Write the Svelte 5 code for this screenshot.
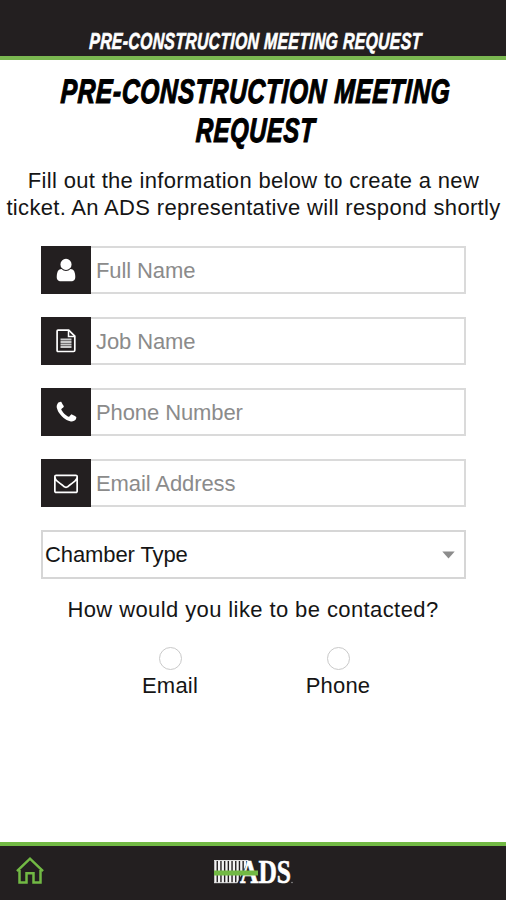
<script>
  const fields = [
    { icon: 'user', label: 'Full Name' },
    { icon: 'file', label: 'Job Name' },
    { icon: 'phone', label: 'Phone Number' },
    { icon: 'mail', label: 'Email Address' }
  ];
  const paths = {
    user: 'M1536 1399q0 109-62.5 187t-150.5 78h-854q-88 0-150.5-78t-62.5-187q0-85 8.5-160.5t31.5-152 58.5-131 94-89 134.5-34.5q131 128 313 128t313-128q76 0 134.5 34.5t94 89 58.5 131 31.5 152 8.5 160.5zm-256-887q0 159-112.5 271.5t-271.5 112.5-271.5-112.5-112.5-271.5 112.5-271.5 271.5-112.5 271.5 112.5 112.5 271.5z',
    phone: 'M1600 1240q0 27-10 70.5t-21 68.5q-21 50-122 106-94 51-186 51-27 0-53-3.5t-57.5-12.5-47-14.5-55.5-20.5-49-18q-98-35-175-83-127-79-264-216t-216-264q-48-77-83-175-3-9-18-49t-20.5-55.5-14.5-47-12.5-57.5-3.5-53q0-92 51-186 56-101 106-122 25-11 68.5-21t70.5-10q14 0 21 3 18 6 53 76 11 19 30 54t35 63.5 31 53.5q3 4 17.5 25t21.5 35.5 7 28.5q0 20-28.5 50t-62 55-62 53-28.5 46q0 9 5 22.5t8.5 20.5 14 24 11.5 19q76 137 174 235t235 174q2 1 19 11.5t24 14 20.5 8.5 22.5 5q18 0 46-28.5t53-62 55-62 50-28.5q14 0 28.5 7t35.5 21.5 25 17.5q25 15 53.5 31t63.5 35 54 30q70 35 76 53 3 7 3 21z',
    mail: 'M1664 1504v-768q-32 36-69 66-268 206-426 338-51 43-83 67t-86.5 48.5-102.5 24.5h-2q-48 0-102.5-24.5t-86.5-48.5-83-67q-158-132-426-338-37-30-69-66v768q0 13 9.5 22.5t22.5 9.5h1472q13 0 22.5-9.5t9.5-22.5zm0-1051v-24.5l-.5-13-3-12.5-5.5-9-9-7.5-14-2.5h-1472q-13 0-22.5 9.5t-9.5 22.5q0 168 147 284 193 152 401 317 6 5 35 29.5t46 37.5 44.5 31.5 50.5 27.5 43 9h2q20 0 43-9t50.5-27.5 44.5-31.5 46-37.5 35-29.5q208-165 401-317 54-43 100.5-115.5t46.5-131.5zm128-37v1088q0 66-47 113t-113 47h-1472q-66 0-113-47t-47-113v-1088q0-66 47-113t113-47h1472q66 0 113 47t47 113z'
  };
  const ribs = [0, 1, 2, 3, 4, 5, 6, 7, 8, 9];
</script>

<div class="screen">
  <header><span class="cond">PRE-CONSTRUCTION MEETING REQUEST</span></header>
  <main>
    <h1>
      <span class="cond">PRE-CONSTRUCTION MEETING</span>
      <span class="cond short">REQUEST</span>
    </h1>
    <p class="intro">
      <span>Fill out the information below to create a new</span>
      <span>ticket. An ADS representative will respond shortly</span>
    </p>
    <div class="form">
      {#each fields as f}
        <div class="field">
          <div class="icon">
            {#if f.icon === 'file'}
              <svg width="20" height="24" viewBox="0 0 20 24" fill="none" stroke="#fff">
                <path d="M2 1.2H12.7L18.8 7.2V21.2Q18.8 22.5 17.5 22.5H2Q1.1 22.5 1.1 21.5V2Q1.1 1.2 2 1.2Z" stroke-width="1.7" />
                <path d="M12.5 1.5V7.5H18.5" stroke-width="1.5" />
                <path d="M4.5 10.5H15.5M4.5 13H15.5M4.5 15.5H15.5M4.5 18H15.5" stroke-width="1.8" stroke="#c9c9c9" />
              </svg>
            {:else}
              <svg class={f.icon} viewBox="0 0 1792 1792" fill="#fff"><path d={paths[f.icon]} /></svg>
            {/if}
          </div>
          <div class="input">{f.label}</div>
        </div>
      {/each}
      <div class="select">
        <span>Chamber Type</span>
        <svg width="13" height="8" viewBox="0 0 13 8"><path d="M.3.5H12.7L6.5 7.6Z" fill="#8c8c8c" /></svg>
      </div>
    </div>
    <p class="question">How would you like to be contacted?</p>
    <div class="options">
      <div class="option"><i></i><span>Email</span></div>
      <div class="option"><i></i><span>Phone</span></div>
    </div>
  </main>
  <footer>
    <svg class="home" width="30" height="30" viewBox="0 0 30 30" fill="none" stroke="#72b944" stroke-width="2.5">
      <path d="M4.5 14V26.5H11.5V17.3H18.5V26.5H25.5V14" />
      <path d="M2 15.2L15 2.7L28 15.2" />
    </svg>
    <svg class="logo" width="90" height="48" viewBox="0 -10 90 48">
      {#each ribs as r}
        <path d={`M${1.4 + r * 3.7} 2V25`} stroke="#f4f4f4" stroke-width="2.3" />
      {/each}
      <path d="M0 2.5H35M0 24.7H24" stroke="#ddd" stroke-width="1" />
      <path d="M35.5 0H50V28H22Z" fill="#231f20" />
      <text x="26" y="25.2" textLength="51" lengthAdjust="spacingAndGlyphs">ADS</text>
      <path d="M0 12.5H44V17.5H0Z" fill="#72b944" />
      <circle cx="78" cy="24.500" r=".7" fill="#aaa" />
    </svg>
  </footer>
</div>

<style>
  :global(body) { margin: 0; background: #fff; }
  .screen {
    width: 506px; height: 900px; display: flex; flex-direction: column; overflow: hidden;
    font: 22px/27px "Liberation Sans", Arial, sans-serif; color: #151515; background: #fff;
  }
  header {
    box-sizing: border-box; height: 60px; flex: none; display: flex; justify-content: center;
    background: #231f20; border-bottom: 4px solid #7ab750; padding-top: 28px; color: #fff;
  }
  .cond { display: block; white-space: nowrap; font-weight: bold; font-style: italic; }
  header .cond { font-size: 23px; line-height: 26px; letter-spacing: .5px; -webkit-text-stroke: .7px #fff; transform: translateX(2px) scaleX(.685) skewX(-4deg); }
  main { flex: 1; display: flex; flex-direction: column; }
  h1 { margin: 12px 0 0; display: flex; flex-direction: column; align-items: center; color: #000; font-size: 34px; line-height: 39px; }
  h1 .cond { letter-spacing: 1px; -webkit-text-stroke: 1.2px #000; transform: translateX(3px) scaleX(.717) skewX(-4deg); }
  h1 .short { transform: translateX(3px) scaleX(.695) skewX(-4deg); }
  .intro { margin: 17px 0 0 1px; display: flex; flex-direction: column; align-items: center; white-space: nowrap; letter-spacing: .32px; }
  .form { margin: 25px 40px 0 41px; display: flex; flex-direction: column; gap: 23px; }
  .field { display: flex; height: 48px; }
  .icon { width: 50px; display: flex; align-items: center; justify-content: center; background: #231f20; }
  .user { width: 26px; height: 26px; }
  .phone { width: 25px; height: 25px; }
  .mail { width: 24px; height: 24px; }
  .input { flex: 1; box-sizing: border-box; border: 2px solid #dadada; border-left: 0; padding-left: 5px; line-height: 45px; letter-spacing: -.1px; color: #8b8b8b; }
  .select { box-sizing: border-box; height: 49px; border: 2px solid #d6d6d6; padding: 0 9px 0 2px; letter-spacing: -.1px; display: flex; align-items: center; justify-content: space-between; }
  .question { margin: 17px 0 0; text-align: center; letter-spacing: .4px; }
  .options { display: flex; justify-content: center; margin: 24px 0 0 2px; }
  .option { width: 168px; display: flex; flex-direction: column; align-items: center; }
  .option i { box-sizing: border-box; width: 23px; height: 23px; border: 1.5px solid #c9c9c9; border-radius: 50%; }
  .option span { margin-top: 2px; letter-spacing: .2px; }
  footer { box-sizing: border-box; height: 58px; flex: none; border-top: 4px solid #72b944; background: #231f20; display: flex; align-items: flex-start; }
  .home { margin: 10px 0 0 15px; }
  .logo { margin: 2px 0 0 169px; }
  .logo text { font: bold 34px "Liberation Serif", serif; fill: #fff; stroke: #fff; stroke-width: .6px; }
</style>
